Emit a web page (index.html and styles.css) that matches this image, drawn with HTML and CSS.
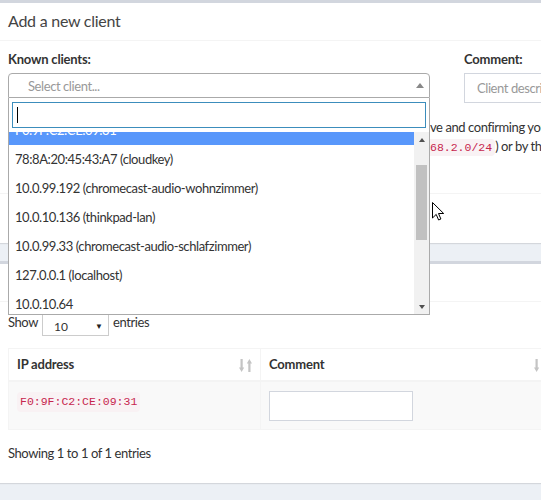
FILE: index.html
```html
<!DOCTYPE html>
<html lang="en">
<head>
<meta charset="utf-8">
<title>Clients</title>
<link rel="stylesheet" href="styles.css">
</head>
<body>
<div class="page">
  <section class="box">
    <header class="box-header"><h3 class="box-title">Add a new client</h3></header>
    <div class="box-body body-add">
      <div class="form-row">
        <div class="field">
          <label class="label">Known clients:</label>
          <div class="select2">
            <div class="selection">
              <span class="placeholder">Select client...</span>
              <span class="arrow"></span>
            </div>
            <div class="dropdown">
              <div class="search"><div class="search-field"><span class="caret"></span></div></div>
              <div class="results-wrap">
                <ul class="results">
                  <li>10.0.10.1 (fritz.box)</li>
                  <li class="hl">F0:9F:C2:CE:09:31</li>
                  <li>78:8A:20:45:43:A7 (cloudkey)</li>
                  <li>10.0.99.192 (chromecast-audio-wohnzimmer)</li>
                  <li>10.0.10.136 (thinkpad-lan)</li>
                  <li>10.0.99.33 (chromecast-audio-schlafzimmer)</li>
                  <li>127.0.0.1 (localhost)</li>
                  <li>10.0.10.64</li>
                  <li>10.0.10.25 (nas)</li>
                  <li>10.0.99.1</li>
                  <li>192.168.178.20</li>
                  <li>::1 (localhost)</li>
                  <li>10.0.10.200 (printer)</li>
                </ul>
                <div class="scrollbar">
                  <span class="sb-btn up"></span>
                  <span class="sb-track"><span class="sb-thumb"></span></span>
                  <span class="sb-btn down"></span>
                </div>
              </div>
            </div>
          </div>
        </div>
        <div class="field">
          <label class="label">Comment:</label>
          <input class="form-control" type="text" placeholder="Client description (optional)">
        </div>
      </div>
      <div class="hints">
        <p class="line"><span class="hid">You can select an existing client or add a custom one by typing into the field abo</span>ve and confirming your entry with ⏎.</p>
        <p class="line"><span class="hid">Clients may be described by their IP address or a subnet (like <code>192.1</code></span><code class="tail">68.2.0/24</code>) or by their MAC address (like <code>12:34:56:78:9A:BC</code>).</p>
      </div>
    </div>
    <footer class="box-footer"></footer>
  </section>

  <section class="box">
    <header class="box-header"><h3 class="box-title">List of configured clients</h3></header>
    <div class="box-body body-list">
      <div class="length">
        <span>Show</span>
        <span class="len-select"><span class="len-value">10</span><span class="len-arrow">▼</span></span>
        <span>entries</span>
      </div>
      <table class="table">
        <thead>
          <tr>
            <th class="col-ip">IP address<svg class="sort" viewBox="0 0 13 13" width="13" height="13"><path d="M1.5 0h2.2v8.5h1.5l-2.6 4.5-2.6-4.5h1.5z" fill="#c4c4c4"/><path d="M10.4 0l2.6 4.5h-1.5v8.5h-2.2v-8.5h-1.5z" fill="#c4c4c4"/></svg></th>
            <th class="col-comment">Comment<svg class="sort" viewBox="0 0 13 13" width="13" height="13"><path d="M1.5 0h2.2v8.5h1.5l-2.6 4.5-2.6-4.5h1.5z" fill="#c4c4c4"/><path d="M10.4 0l2.6 4.5h-1.5v8.5h-2.2v-8.5h-1.5z" fill="#c4c4c4"/></svg></th>
          </tr>
        </thead>
        <tbody>
          <tr>
            <td><code>F0:9F:C2:CE:09:31</code></td>
            <td><input class="cell-input" type="text"></td>
          </tr>
        </tbody>
      </table>
      <div class="info">Showing 1 to 1 of 1 entries</div>
    </div>
  </section>
</div>
<svg class="pointer" width="13" height="19" viewBox="0 0 13 19"><path d="M0.5 0.5v15.5l3.7-3.6 2.4 5.6 2.3-1-2.4-5.5h5.2z" fill="#fff" stroke="#000" stroke-width="1" stroke-linejoin="round"/></svg>
<script src="script.js"></script>
</body>
</html>
```

FILE: styles.css
```css
* { box-sizing: border-box; }
html, body { margin: 0; padding: 0; }
body {
  background: #ecf0f5;
  font-family: Lato, "Noto Sans", sans-serif;
  font-size: 13px;
  letter-spacing: -0.42px;
  line-height: 20px;
  color: #333;
  width: 541px;
  height: 500px;
  overflow: hidden;
  position: relative;
}
.page { width: 564px; }
.box {
  position: relative;
  background: #fff;
  border-top: 3px solid #d2d6de;
  box-shadow: 0 1px 1px rgba(0,0,0,.1);
  margin-bottom: 18px;
}
.box-header { padding: 9px 8px 10px; border-bottom: 1px solid #f4f4f4; }
.box-title { margin: 0; font-size: 16px; letter-spacing: -0.25px; line-height: 18px; font-weight: 400; color: #444; }
.box-body { padding: 8px 8px 36px; }
.box-footer { height: 50px; border-top: 1px solid #f4f4f4; }

.form-row { display: grid; grid-template-columns: 422px 1fr; column-gap: 34px; align-items: start; }
.label { display: block; font-weight: 700; letter-spacing: -0.2px; line-height: 20px; margin-bottom: 4px; }

.select2 { position: relative; }
.selection {
  height: 25px;
  border: 1px solid #aaa;
  border-radius: 4px 4px 0 0;
  display: flex;
  align-items: center;
  padding-left: 19px;
  color: #999;
}
.arrow {
  margin-left: auto;
  margin-right: 5px;
  width: 0; height: 0;
  border-style: solid;
  border-color: transparent transparent #888 transparent;
  border-width: 0 4px 5px 4px;
}
.dropdown {
  position: absolute;
  top: 100%;
  left: 0;
  right: 0;
  z-index: 10;
  background: #fff;
  border: 1px solid #aaa;
  border-top: none;
}
.search { padding: 4px 3px; }
.search-field {
  height: 26px;
  border: 1px solid #3c8dbc;
  display: flex;
  align-items: center;
  padding-left: 4px;
}
.caret { width: 1px; height: 16px; background: #000; }
.results-wrap { display: flex; height: 182px; }
.results {
  flex: 1;
  list-style: none;
  margin: 0;
  padding: 0;
  height: 182px;
  overflow: hidden;
}
.results li { padding: 6px; line-height: 17px; white-space: nowrap; }
.results li.hl { background: #5897fb; color: #fff; }
.scrollbar {
  width: 15px;
  background: #f1f1f1;
  display: flex;
  flex-direction: column;
}
.sb-btn { height: 15px; display: flex; align-items: center; justify-content: center; }
.sb-btn::before {
  content: "";
  width: 0; height: 0;
  border-style: solid;
  border-color: transparent;
}
.sb-btn.up::before { border-width: 0 3.5px 4px; border-bottom-color: #505050; }
.sb-btn.down::before { border-width: 4px 3.5px 0; border-top-color: #505050; }
.sb-track { flex: 1; padding: 18px 2px 0; }
.sb-thumb { display: block; height: 75px; background: #c1c1c1; }

.form-control {
  display: block;
  width: 100%;
  height: 30px;
  border: 1px solid #d2d6de;
  border-radius: 0;
  padding: 6px 12px;
  font: inherit;
  letter-spacing: inherit;
  color: #555;
  background: #fff;
}
.form-control::placeholder { color: #999; }

.hints { margin-top: 15px; }
.line { margin: 0; white-space: nowrap; line-height: 19px; }
.hid { display: inline-block; width: 422px; overflow: hidden; white-space: nowrap; vertical-align: top; }

code {
  font-family: "Liberation Mono", "DejaVu Sans Mono", monospace;
  font-size: 11.5px;
  letter-spacing: 0;
  color: #c7254e;
  background: #f9f2f4;
  padding: 2px 3px;
  border-radius: 4px;
}
code.tail { padding-left: 0; border-radius: 0 4px 4px 0; }

.body-list { padding: 12px 8px 20px; }
.length { display: flex; align-items: flex-start; gap: 4px; line-height: 17px; }
.len-select {
  width: 67px;
  height: 22px;
  border: 1px solid #ccc;
  display: flex;
  align-items: center;
  padding: 2px 5px 0 11px;
  font-size: 12px;
  letter-spacing: 0;
}
.len-value { flex: 1; }
.len-arrow { font-size: 8px; color: #222; }

.table {
  width: 548px;
  margin-top: 12px;
  border-collapse: collapse;
  border: 1px solid #f4f4f4;
}
.table th {
  padding: 8px;
  line-height: 15px;
  text-align: left;
  font-weight: 700;
  letter-spacing: -0.2px;
  border: 1px solid #f4f4f4;
  border-bottom: 2px solid #f4f4f4;
}
.col-ip { width: 252px; }
.sort { float: right; margin-top: 2px; }
.table td {
  padding: 8px;
  background: #f9f9f9;
  vertical-align: top;
  border: 1px solid #f4f4f4;
}
.table td code { display: inline-block; margin-top: 2px; line-height: 16px; }
.cell-input {
  display: block;
  width: 144px;
  height: 30px;
  margin-top: 1px;
  border: 1px solid #d2d6de;
  background: #fff;
  font: inherit;
}
.info { margin-top: 13px; line-height: 20px; }

.pointer { position: absolute; left: 432px; top: 202px; z-index: 20; }
```

FILE: script.js
```js
document.querySelector('.results').scrollTop = 45;
```
